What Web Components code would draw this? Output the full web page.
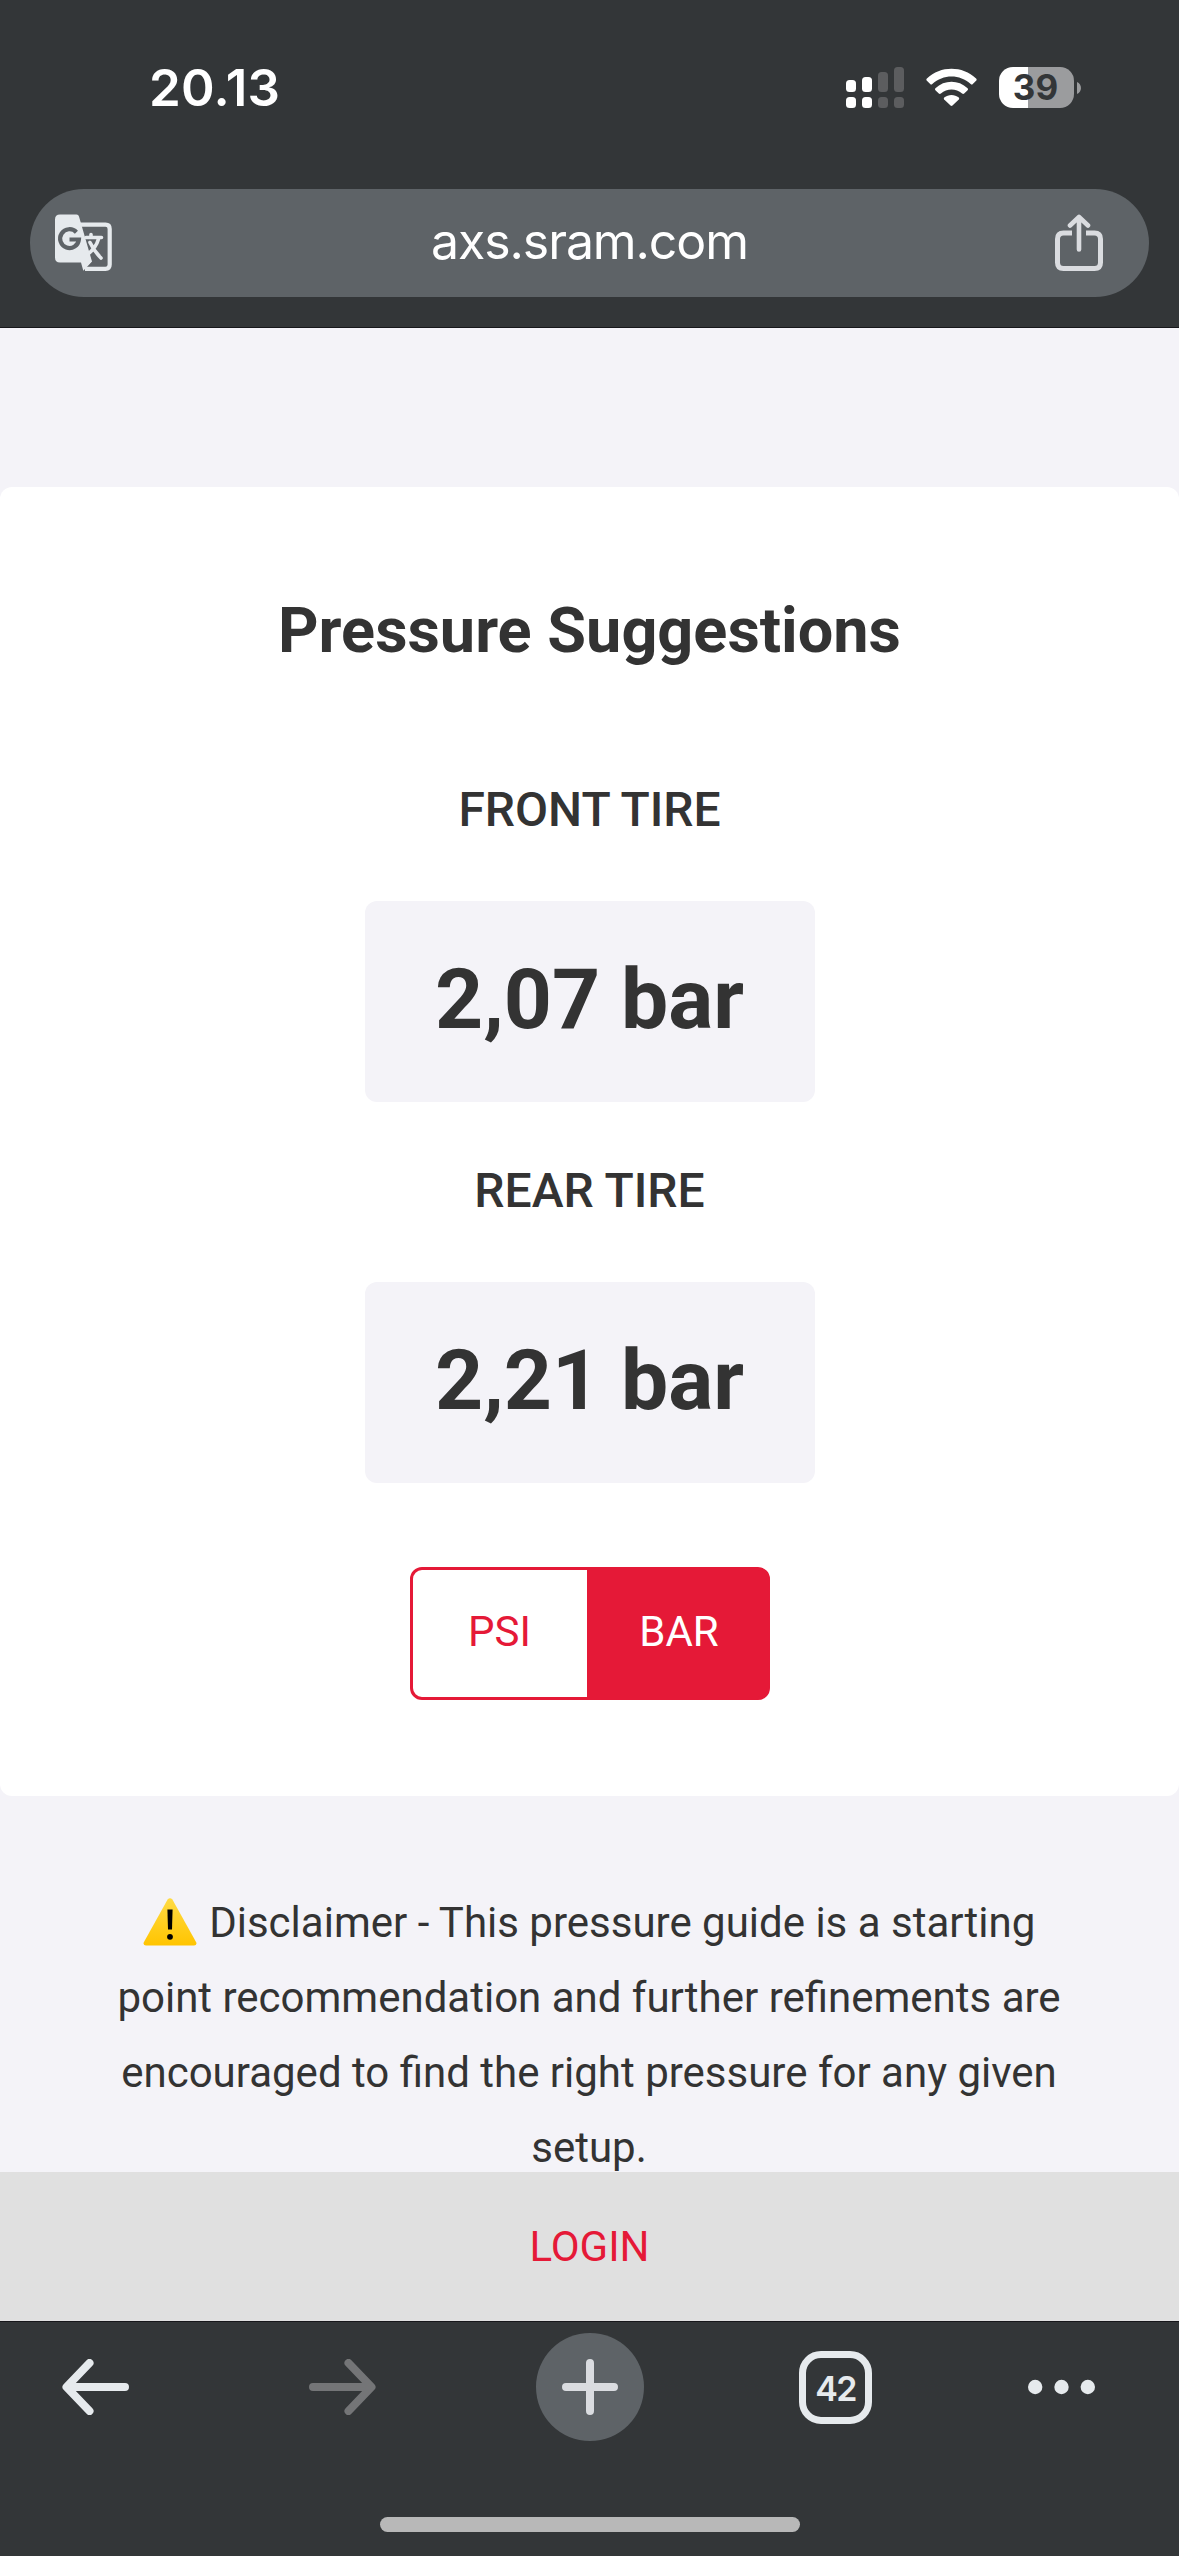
<!DOCTYPE html>
<html lang="en">
<head>
<meta charset="utf-8">
<title>Pressure Suggestions</title>
<style>
  html, body { margin: 0; padding: 0; }
  body {
    width: 1179px;
    height: 2556px;
    overflow: hidden;
    display: flex;
    flex-direction: column;
    background: #f4f3f8;
    color: #333333;
    font-family: Roboto, "Liberation Sans", sans-serif;
  }
</style>
</head>
<body>
  <status-bar time="20.13" battery="39"></status-bar>
  <url-bar>axs.sram.com</url-bar>

  <page-view>
    <pressure-card>
      <span slot="title">Pressure Suggestions</span>
      <tire-value label="FRONT TIRE">2,07 bar</tire-value>
      <tire-value label="REAR TIRE">2,21 bar</tire-value>
      <unit-toggle slot="units" left="PSI" right="BAR"></unit-toggle>
    </pressure-card>
    <disclaimer-text>Disclaimer - This pressure guide is a starting point recommendation and further refinements are encouraged to find the right pressure for any given setup.</disclaimer-text>
  </page-view>

  <login-bar>LOGIN</login-bar>
  <browser-toolbar tabs="42"></browser-toolbar>

<script>
class StatusBar extends HTMLElement {
  constructor() {
    super();
    const shadow = this.attachShadow({ mode: 'open' });
    shadow.innerHTML = `
      <style>
        :host {
          display: flex;
          flex: none;
          justify-content: space-between;
          align-items: center;
          box-sizing: border-box;
          height: 175px;
          padding: 0 98px 0 149px;
          background: #333638;
          color: #fff;
          font-family: Inter, "Liberation Sans", sans-serif;
        }
        .time { font-size: 51px; font-weight: 600; letter-spacing: 0.3px; line-height: 60px; }
        .icons { display: flex; align-items: center; }
        .signal { margin-right: 22px; }
        .wifi { margin-right: 22px; }
        .battery {
          width: 75px;
          height: 41px;
          border-radius: 14px;
          background: linear-gradient(to right, #fff 29px, #9b9c9e 29px);
          color: #333638;
          font-size: 35px;
          font-weight: 700;
          line-height: 41px;
          text-align: center;
          text-indent: -2px;
        }
        .nub { width: 4px; height: 12px; margin-left: 3px; }
        svg { display: block; }
      </style>
      <span class="time"></span>
      <div class="icons">
        <svg class="signal" width="58" height="41" viewBox="0 0 58 41" fill="#fff">
          <rect x="0" y="13" width="10" height="12" rx="3.5"/>
          <rect x="16" y="10" width="10" height="15" rx="3.5"/>
          <rect x="0" y="30" width="10" height="11" rx="3.5"/>
          <rect x="16" y="30" width="10" height="11" rx="3.5"/>
          <g fill="#5c5d5f">
            <rect x="32" y="5" width="10" height="20" rx="3.5"/>
            <rect x="48" y="0" width="10" height="25" rx="3.5"/>
            <rect x="32" y="30" width="10" height="11" rx="3.5"/>
            <rect x="48" y="30" width="10" height="11" rx="3.5"/>
          </g>
        </svg>
        <svg class="wifi" width="51" height="41" viewBox="0 0 51 41" fill="#fff">
          <path d="M.9 11.6C14.5-1.4 36.5-1.4 50.1 11.6Q51.200 12.700 50.1 13.700L46.800 17Q45.800 18 44.700 17C34 7 17 7 6.300 17Q5.200 18 4.200 17L.9 13.700Q-.2 12.700.9 11.600Z"/>
          <path d="M9.400 21.200C18.500 12.600 32.500 12.600 41.600 21.200Q42.600 22.200 41.600 23.200L38.200 26.500Q37.200 27.400 36.100 26.500C30 21.200 21 21.200 14.900 26.500Q13.800 27.400 12.800 26.500L9.400 23.200Q8.400 22.200 9.400 21.200Z"/>
          <path d="M18.200 30.600C22.400 27 28.600 27 32.800 30.600Q33.700 31.500 32.800 32.500L26.500 38.600Q25.500 39.500 24.500 38.600L18.200 32.500Q17.300 31.500 18.200 30.600Z"/>
        </svg>
        <div class="battery"></div>
        <svg class="nub" viewBox="0 0 4 12"><path d="M0 0C5.300 2 5.300 10 0 12Z" fill="#9b9c9e"/></svg>
      </div>
    `;
    this.time = shadow.querySelector('.time');
    this.battery = shadow.querySelector('.battery');
  }

  connectedCallback() {
    this.time.textContent = this.getAttribute('time') || '';
    this.battery.textContent = this.getAttribute('battery') || '';
  }
}

class UrlBar extends HTMLElement {
  constructor() {
    super();
    const shadow = this.attachShadow({ mode: 'open' });
    shadow.innerHTML = `
      <style>
        :host {
          display: block;
          flex: none;
          box-sizing: border-box;
          height: 153px;
          padding: 14px 30px 0;
          background: #333638;
          border-bottom: 1px solid #17171b;
        }
        .pill {
          display: grid;
          grid-template-columns: 100px 1fr 100px;
          align-items: center;
          box-sizing: border-box;
          height: 108px;
          border-radius: 54px;
          background: #5e6367;
        }
        .url {
          color: #fff;
          font-family: Inter, "Liberation Sans", sans-serif;
          font-size: 50px;
          line-height: 60px;
          letter-spacing: -1.1px;
          text-align: center;
          padding-bottom: 4px;
        }
        svg { display: block; }
        .translate { margin-left: 25px; }
        .share { margin-left: 6px; }
      </style>
      <div class="pill">
        <svg class="translate" width="57" height="58" viewBox="0 0 57 58">
          <path d="M25 10.700H50.500Q54.700 10.700 54.700 15V50.500Q54.700 54.800 50.500 54.800H30" fill="none" stroke="#e6eaed" stroke-width="4.200"/>
          <path d="M5 .5H21.500Q23.500.5 24 2.500L37 47.500L28.300 56.800L26 48.500H5Q0 48.500 0 43.500V5.500Q0 .5 5 .5Z" fill="#e6eaed"/>
          <path d="M21.400 18.200A9.400 9.400 0 1 0 23.900 25.500H14.500" fill="none" stroke="#5e6367" stroke-width="4.200"/>
          <path d="M31 23.500H46.500M36 20.500V23.500M43.500 25Q41 34 32 41M35 28.500Q39 37 46 44" fill="none" stroke="#e6eaed" stroke-width="3.600" stroke-linecap="round"/>
          <path d="M31.500 53L36.500 47.500L34.500 42" fill="#e6eaed"/>
        </svg>
        <span class="url"><slot></slot></span>
        <svg class="share" width="48" height="58" viewBox="0 0 48 58" fill="none" stroke="#dadce0" stroke-width="5">
          <path d="M17 19H8.500Q2.500 19 2.500 25V48.500Q2.500 54.500 8.500 54.500H39.500Q45.500 54.500 45.500 48.500V25Q45.500 19 39.500 19H31"/>
          <path d="M24 35.500V4M15 11.500L24 3L33 11.500" stroke-linecap="round" stroke-linejoin="round" stroke-width="4.600"/>
        </svg>
      </div>
    `;
  }
}

class PageView extends HTMLElement {
  constructor() {
    super();
    const shadow = this.attachShadow({ mode: 'open' });
    shadow.innerHTML = `
      <style>
        :host {
          display: block;
          box-sizing: border-box;
          flex: none;
          height: 1844px;
          padding-top: 159px;
          overflow: hidden;
          background: #f4f3f8;
        }
      </style>
      <slot></slot>
    `;
  }
}

class PressureCard extends HTMLElement {
  constructor() {
    super();
    const shadow = this.attachShadow({ mode: 'open' });
    shadow.innerHTML = `
      <style>
        :host {
          display: flex;
          flex-direction: column;
          align-items: center;
          box-sizing: border-box;
          height: 1309px;
          padding-top: 106px;
          border-radius: 12px;
          background: #fff;
        }
        h1 { margin: 0 0 105px; font-size: 63px; font-weight: 700; line-height: 76px; }
        .tires { display: flex; flex-direction: column; gap: 53px; }
        .units { margin-top: 84px; }
      </style>
      <h1><slot name="title"></slot></h1>
      <div class="tires"><slot></slot></div>
      <div class="units"><slot name="units"></slot></div>
    `;
  }
}

class TireValue extends HTMLElement {
  constructor() {
    super();
    const shadow = this.attachShadow({ mode: 'open' });
    shadow.innerHTML = `
      <style>
        :host { display: flex; flex-direction: column; align-items: center; }
        .label { font-size: 48px; font-weight: 500; line-height: 72px; margin-bottom: 55px; }
        .box {
          box-sizing: border-box;
          width: 450px;
          height: 201px;
          padding-bottom: 4px;
          display: flex;
          align-items: center;
          justify-content: center;
          border-radius: 12px;
          background: #f4f3f8;
          font-size: 84px;
          font-weight: 700;
        }
      </style>
      <div class="label"></div>
      <div class="box"><slot></slot></div>
    `;
    this.label = shadow.querySelector('.label');
  }

  connectedCallback() {
    this.label.textContent = this.getAttribute('label') || '';
  }
}

class UnitToggle extends HTMLElement {
  constructor() {
    super();
    const shadow = this.attachShadow({ mode: 'open' });
    shadow.innerHTML = `
      <style>
        :host {
          display: flex;
          box-sizing: border-box;
          width: 360px;
          height: 133px;
          border: 3px solid #e51937;
          border-radius: 12px;
          background: linear-gradient(to right, #fff 174px, #e51937 174px);
          font-size: 42px;
          line-height: 123px;
          text-align: center;
        }
        .left { width: 174px; color: #e51937; }
        .right { flex: 1; padding-left: 5px; color: #fff; }
      </style>
      <div class="left"></div>
      <div class="right"></div>
    `;
    this.left = shadow.querySelector('.left');
    this.right = shadow.querySelector('.right');
  }

  connectedCallback() {
    this.left.textContent = this.getAttribute('left') || '';
    this.right.textContent = this.getAttribute('right') || '';
  }
}

class DisclaimerText extends HTMLElement {
  constructor() {
    super();
    const shadow = this.attachShadow({ mode: 'open' });
    shadow.innerHTML = `
      <style>
        :host {
          display: block;
          padding: 89px 96px 0 95px;
          font-size: 42px;
          line-height: 75px;
          text-align: center;
        }
        svg { width: 54px; height: 48px; margin-right: 2px; vertical-align: -9px; }
      </style>
      <svg viewBox="0 0 54 48">
        <defs>
          <linearGradient id="warn" x1="0" y1="0" x2="0" y2="1">
            <stop offset="0" stop-color="#ffdb45"/>
            <stop offset="1" stop-color="#ffc400"/>
          </linearGradient>
        </defs>
        <path d="M24.600 1.500Q27-1.200 29.400 1.500L53.300 44.500Q54 47.500 51 47.500H3Q0 47.500.7 44.500Z" fill="url(#warn)"/>
        <path d="M24.400 11.500H29.600L29 31.500H25Z"/>
        <circle cx="27" cy="38.800" r="2.900"/>
      </svg>
      <slot></slot>
    `;
  }
}

class LoginBar extends HTMLElement {
  constructor() {
    super();
    const shadow = this.attachShadow({ mode: 'open' });
    shadow.innerHTML = `
      <style>
        :host {
          display: block;
          flex: none;
          height: 149px;
          background: #e0e0e0;
          color: #e51937;
          font-size: 42px;
          line-height: 149px;
          text-align: center;
        }
      </style>
      <slot></slot>
    `;
  }
}

class BrowserToolbar extends HTMLElement {
  constructor() {
    super();
    const shadow = this.attachShadow({ mode: 'open' });
    shadow.innerHTML = `
      <style>
        :host {
          display: flex;
          flex: 1;
          flex-direction: column;
          align-items: center;
          justify-content: space-between;
          box-sizing: border-box;
          padding: 11px 0 24px;
          border-top: 1px solid #17171b;
          background: #333638;
        }
        .buttons {
          display: flex;
          align-items: center;
          gap: 155px;
          box-sizing: border-box;
          width: 100%;
          height: 108px;
          padding-left: 62px;
        }
        .back { margin-right: 25px; }
        .forward { margin-right: 5px; }
        .add {
          display: flex;
          align-items: center;
          justify-content: center;
          width: 108px;
          height: 108px;
          border-radius: 50%;
          background: #5e6367;
        }
        .tabs {
          box-sizing: border-box;
          width: 73px;
          height: 73px;
          border: 7px solid #e6eaed;
          border-radius: 22px;
          color: #e6eaed;
          font: 600 34px/61px Inter, "Liberation Sans", sans-serif;
          letter-spacing: -1.6px;
          text-align: center;
        }
        .more { margin-left: 1px; }
        .home { width: 420px; height: 15px; border-radius: 8px; background: #b8b8b8; }
        svg { display: block; }
      </style>
      <div class="buttons">
        <svg class="back" width="67" height="56" viewBox="0 0 67 56" fill="none" stroke="#e6eaed" stroke-width="8" stroke-linecap="round" stroke-linejoin="round">
          <path d="M63 28H5M27.500 4L4.500 28L27.500 52"/>
        </svg>
        <svg class="forward" width="67" height="56" viewBox="0 0 67 56" fill="none" stroke="#747577" stroke-width="8" stroke-linecap="round" stroke-linejoin="round">
          <path d="M4 28H62M39.500 4L62.500 28L39.500 52"/>
        </svg>
        <div class="add">
          <svg width="56" height="56" viewBox="0 0 56 56" stroke="#dadce0" stroke-width="8" stroke-linecap="round">
            <path d="M28 4V52M4 28H52"/>
          </svg>
        </div>
        <div class="tabs"></div>
        <svg class="more" width="67" height="16" viewBox="0 0 67 16" fill="#e6eaed">
          <circle cx="7.200" cy="8" r="7.200"/>
          <circle cx="33.500" cy="8" r="7.200"/>
          <circle cx="59.800" cy="8" r="7.200"/>
        </svg>
      </div>
      <div class="home"></div>
    `;
    this.tabs = shadow.querySelector('.tabs');
  }

  connectedCallback() {
    this.tabs.textContent = this.getAttribute('tabs') || '';
  }
}

customElements.define('status-bar', StatusBar);
customElements.define('url-bar', UrlBar);
customElements.define('page-view', PageView);
customElements.define('pressure-card', PressureCard);
customElements.define('tire-value', TireValue);
customElements.define('unit-toggle', UnitToggle);
customElements.define('disclaimer-text', DisclaimerText);
customElements.define('login-bar', LoginBar);
customElements.define('browser-toolbar', BrowserToolbar);
</script>
</body>
</html>
